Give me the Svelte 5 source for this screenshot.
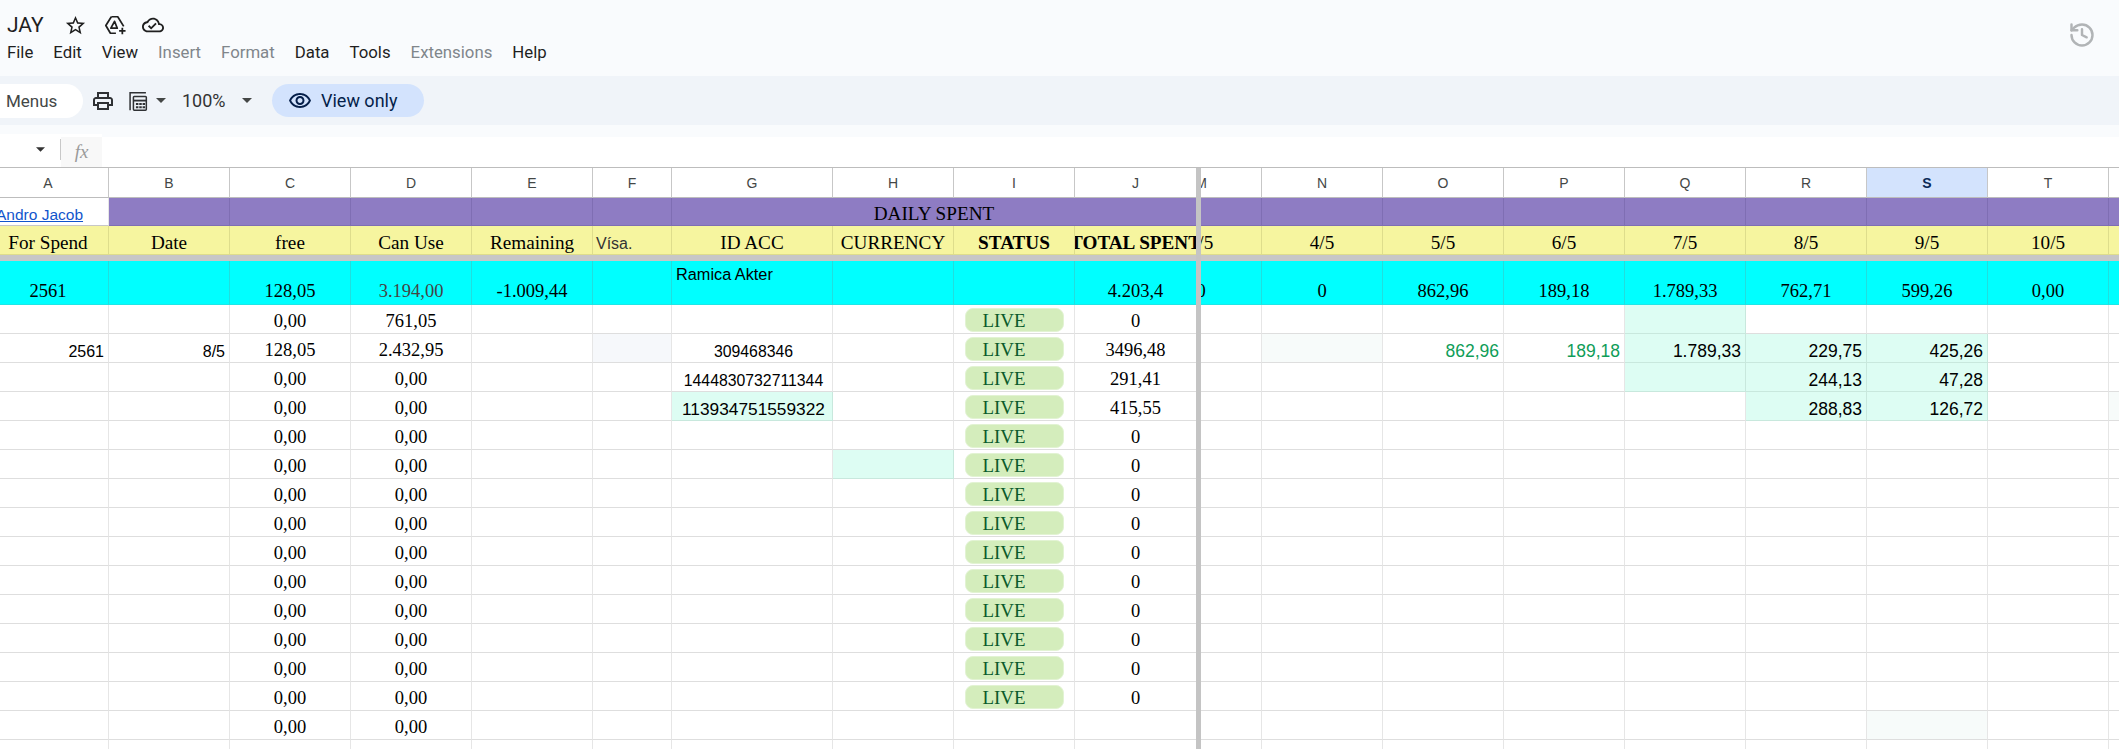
<script>
  const frozenWidths = [121, 121, 121, 121, 121, 79, 161, 121, 121, 122];
  const frozenLetters = ['A', 'B', 'C', 'D', 'E', 'F', 'G', 'H', 'I', 'J'];
  const paneLetters = ['M', 'N', 'O', 'P', 'Q', 'R', 'S', 'T', 'U'];
  const paneWidths = paneLetters.map(() => 121);
  const tracks = (w) => w.map((n) => n + 'px').join(' ');

  const frozenYellow = [
    { t: 'For Spend' }, { t: 'Date' }, { t: 'free' }, { t: 'Can Use' }, { t: 'Remaining' },
    { t: 'Vísa.', c: 'visa' }, { t: 'ID ACC' }, { t: 'CURRENCY' }, { t: 'STATUS', c: 'bold' }, { t: 'TOTAL SPENT', c: 'bold' }
  ];
  const paneYellow = ['3/5', '4/5', '5/5', '6/5', '7/5', '8/5', '9/5', '10/5', ''];
  const frozenCyan = [
    { t: '2561' }, { t: '' }, { t: '128,05' }, { t: '3.194,00', c: 'dim' }, { t: '-1.009,44' }, { t: '' },
    { t: 'Ramica Akter', c: 'note' }, { t: '' }, { t: '' }, { t: '4.203,4' }
  ];
  const paneCyan = ['0', '0', '862,96', '189,18', '1.789,33', '762,71', '599,26', '0,00', ''];

  const ROWS = 16;
  const frozenOverrides = {
    0: { 3: { t: '761,05' } },
    1: {
      0: { t: '2561', c: 'num' }, 1: { t: '8/5', c: 'num' }, 2: { t: '128,05' }, 3: { t: '2.432,95' },
      5: { t: '', c: 'pale' }, 6: { t: '309468346', c: 'id' }, 9: { t: '3496,48' }
    },
    2: { 6: { t: '1444830732711344', c: 'id' }, 9: { t: '291,41' } },
    3: { 6: { t: '113934751559322', c: 'idm mint' }, 9: { t: '415,55' } },
    5: { 7: { t: '', c: 'mint' } }
  };
  const paneOverrides = {
    0: { 4: { t: '', c: 'mint' } },
    1: {
      1: { t: '', c: 'faint' }, 2: { t: '862,96', c: 'big green' }, 3: { t: '189,18', c: 'big green' },
      4: { t: '1.789,33', c: 'big mint' }, 5: { t: '229,75', c: 'big mint' }, 6: { t: '425,26', c: 'big mint' }
    },
    2: { 4: { t: '', c: 'mint' }, 5: { t: '244,13', c: 'big mint' }, 6: { t: '47,28', c: 'big mint' } },
    3: { 5: { t: '288,83', c: 'big mint' }, 6: { t: '126,72', c: 'big mint' }, 8: { t: '', c: 'faint' } },
    14: { 6: { t: '', c: 'faint' } }
  };

  const frozenRows = Array.from({ length: ROWS }, (_, r) =>
    frozenLetters.map((_, i) => {
      const o = frozenOverrides[r]?.[i];
      if (o) return o;
      if ((i === 2 || i === 3) && r < 15) return { t: '0,00' };
      if (i === 8 && r < 14) return { live: true };
      if (i === 9 && r < 14) return { t: '0' };
      return { t: '' };
    })
  );
  const paneRows = Array.from({ length: ROWS }, (_, r) =>
    paneLetters.map((_, i) => paneOverrides[r]?.[i] ?? { t: '' })
  );
  const menu = [
    { t: 'File' }, { t: 'Edit' }, { t: 'View' }, { t: 'Insert', off: true }, { t: 'Format', off: true },
    { t: 'Data' }, { t: 'Tools' }, { t: 'Extensions', off: true }, { t: 'Help' }
  ];
</script>

<div class="page">
  <header class="top">
    <div class="top-left">
      <div class="title-row">
        <span class="doc-title">JAY</span>
        <svg class="ic star" viewBox="0 0 24 24"><path d="M22 9.24l-7.19-.62L12 2 9.19 8.63 2 9.24l5.46 4.73L5.82 21 12 17.27 18.18 21l-1.63-7.03L22 9.24zM12 15.4l-3.76 2.27 1-4.28-3.32-2.88 4.38-.38L12 6.1l1.71 4.04 4.38.38-3.32 2.88 1 4.28L12 15.4z"/></svg>
        <svg class="drive" viewBox="0 0 24 24" fill="none" stroke="#1f1f1f" stroke-width="1.9" stroke-linejoin="round"><path d="M8 3h7l6.5 10.5"/><path d="M13 21H7L2 12.5 8 3"/><path d="M11.5 8L7.5 15.5h7z"/><path d="M20 15v7M16.5 18.5h7"/></svg>
        <svg class="ic cloud" viewBox="0 0 24 24"><path d="M19.35 10.04C18.67 6.59 15.64 4 12 4 9.11 4 6.6 5.64 5.35 8.04 2.34 8.36 0 10.91 0 14c0 3.31 2.69 6 6 6h13c2.76 0 5-2.24 5-5 0-2.64-2.05-4.78-4.65-4.96zM19 18H6c-2.21 0-4-1.79-4-4 0-2.05 1.53-3.76 3.56-3.97l1.07-.11.5-.95C8.08 7.14 9.94 6 12 6c2.62 0 4.88 1.86 5.39 4.43l.3 1.5 1.53.11c1.56.1 2.78 1.41 2.78 2.96 0 1.65-1.35 3-3 3zm-9-3.82l-2.09-2.09L6.5 13.5 10 17l6.01-6.01-1.41-1.41z"/></svg>
      </div>
      <nav class="menu">
        {#each menu as m}
          <span class:off={m.off}>{m.t}</span>
        {/each}
      </nav>
    </div>
    <svg class="history" viewBox="0 0 24 24" fill="none" stroke="#b1b4b6" stroke-width="2.1" stroke-linecap="round" stroke-linejoin="round"><path d="M3 12a9 9 0 1 0 9-9 9.75 9.75 0 0 0-6.74 2.74L3 8"/><path d="M3 3v5h5"/><path d="M12 7v5l4 2"/></svg>
  </header>

  <div class="toolbar">
    <span class="pill-menus">Menus</span>
    <svg class="print" viewBox="0 0 24 24"><path d="M19 8h-1V3H6v5H5c-1.66 0-3 1.34-3 3v6h4v4h12v-4h4v-6c0-1.66-1.34-3-3-3zM8 5h8v3H8V5zm8 12v2H8v-4h8v2zm2-2v-2H6v2H4v-4c0-.55.45-1 1-1h14c.55 0 1 .45 1 1v4h-2z"/></svg>
    <svg class="calc" viewBox="0 0 24 24" fill="none" stroke="#2f3134" stroke-width="1.8"><path d="M2.5 23V2h19"/><rect x="6.5" y="6.5" width="15.5" height="16.5" rx="1"/><path d="M6.5 11.5h15.5" stroke-width="2.2"/><path d="M9.5 15.5h3m1 0h3m1 0h3M9.5 19.5h3m1 0h3m1 0h3" stroke-width="2.4"/></svg>
    <svg class="caret c1" viewBox="0 0 10 5"><path d="M0 0h10L5 5z"/></svg>
    <span class="zoom">100%</span>
    <svg class="caret c2" viewBox="0 0 10 5"><path d="M0 0h10L5 5z"/></svg>
    <span class="view-only">
      <svg viewBox="0 0 24 24"><path d="M12 6c3.79 0 7.17 2.13 8.82 5.5C19.17 14.87 15.79 17 12 17s-7.17-2.13-8.82-5.5C4.83 8.13 8.21 6 12 6m0-2C7 4 2.73 7.11 1 11.5 2.73 15.89 7 19 12 19s9.27-3.11 11-7.5C21.27 7.11 17 4 12 4zm0 5c1.38 0 2.5 1.12 2.5 2.5S13.38 14 12 14s-2.5-1.12-2.5-2.5S10.62 9 12 9m0-2c-2.48 0-4.5 2.02-4.5 4.5S9.52 16 12 16s4.5-2.02 4.5-4.5S14.48 7 12 7z"/></svg>
      View only
    </span>
  </div>

  <div class="strip"></div>

  <div class="formula">
    <div class="name-box">
      <svg class="caret c3" viewBox="0 0 10 5"><path d="M0 0h10L5 5z"/></svg>
    </div>
    <span class="sep"></span>
    <span class="fx">fx</span>
    <div class="formula-input"></div>
  </div>

  <div class="sheet">
    <div class="pane frozen">
      <div class="grid g-frozen" style="grid-template-columns:{tracks(frozenWidths)}">
        {#each frozenLetters as l}<div class="cell hd">{l}</div>{/each}

        <div class="cell plain link-cell"><a href="#top">Andro Jacob</a></div>
        {#each [1, 2, 3, 4, 5] as _}<div class="cell purple"></div>{/each}
        <div class="cell purple merged">DAILY SPENT</div>

        {#each frozenYellow as c}<div class="cell yellow {c.c ?? ''}">{c.t}</div>{/each}

        <div class="freeze-h"></div>

        {#each frozenCyan as c}<div class="cell cyan {c.c ?? ''}">{c.t}</div>{/each}

        {#each frozenRows as row}
          {#each row as c}
            {#if c.live}
              <div class="cell body"><span class="live">LIVE</span></div>
            {:else}
              <div class="cell body {c.c ?? ''}">{c.t}</div>
            {/if}
          {/each}
        {/each}
      </div>
    </div>

    <div class="freeze-v"></div>

    <div class="pane scrolled">
      <div class="grid g-pane" style="grid-template-columns:{tracks(paneWidths)}">
        {#each paneLetters as l}<div class="cell hd" class:sel={l === 'S'}>{l}</div>{/each}
        {#each paneLetters as _}<div class="cell purple"></div>{/each}
        {#each paneYellow as t}<div class="cell yellow">{t}</div>{/each}
        <div class="freeze-h"></div>
        {#each paneCyan as t}<div class="cell cyan">{t}</div>{/each}
        {#each paneRows as row}
          {#each row as c}<div class="cell body {c.c ?? ''}">{c.t}</div>{/each}
        {/each}
      </div>
    </div>
  </div>
</div>

<style>
  :global(body) { margin: 0; background: #fff; }
  .page { width: 2119px; height: 749px; overflow: hidden; display: flex; flex-direction: column; font-family: Roboto, "Liberation Sans", sans-serif; color: #1f1f1f; }

  .top { height: 76px; box-sizing: border-box; background: #f9fbfd; display: flex; justify-content: space-between; padding: 13px 23px 0 0; }
  .title-row { height: 24px; display: flex; align-items: center; padding-left: 7px; }
  .doc-title { font-size: 21px; width: 57px; }
  .ic { fill: #1f1f1f; display: block; }
  .star { width: 23px; height: 23px; }
  .drive { display: block; width: 22px; height: 22px; margin-left: 17px; }
  .cloud { width: 22px; height: 22px; margin-left: 16px; }
  .menu { display: flex; gap: 20px; padding-left: 7px; margin-top: 4px; font-size: 16.8px; line-height: 22px; }
  .menu .off { color: #80868b; }
  .history { width: 28px; height: 28px; margin-top: 8px; }

  .toolbar { height: 49px; background: #f0f4f9; display: flex; align-items: center; }
  .pill-menus { height: 34px; padding-left: 6px; box-sizing: border-box; width: 83px; background: #fff; border-radius: 0 17px 17px 0; display: flex; align-items: center; font-size: 17px; color: #444746; }
  .print { display: block; fill: #2f3134; width: 24px; height: 24px; margin-left: 8px; }
  .calc { display: block; width: 20px; height: 20px; margin-left: 13px; }
  .caret { display: block; fill: #444746; }
  .c1 { width: 10px; height: 5px; margin-left: 8px; }
  .zoom { font-size: 18px; color: #333; margin-left: 16px; width: 44px; }
  .c2 { width: 10px; height: 5px; margin-left: 16px; }
  .view-only { margin-left: 20px; width: 152px; height: 33px; box-sizing: border-box; padding-left: 17px; background: #d3e3fd; border-radius: 17px; display: flex; align-items: center; gap: 9px; color: #041e49; font-size: 18px; }
  .view-only svg { width: 24px; height: 24px; fill: #041e49; margin-left: -1px; }

  .strip { height: 9px; background: #f9fbfd; }
  .formula { height: 34px; box-sizing: border-box; background: #fff; display: flex; align-items: center; border-bottom: 1px solid #bdbdbd; }
  .name-box { width: 60px; height: 100%; display: flex; align-items: center; box-sizing: border-box; padding-left: 36px; }
  .c3 { width: 9px; height: 5px; fill: #333; margin-top: -3px; }
  .sep { width: 1px; height: 21px; background: #c8c8c8; margin-top: -3px; }
  .fx { width: 41px; height: 30px; margin-top: 3px; background: #f8f8f8; display: flex; align-items: center; justify-content: center; font: italic 19px "Liberation Serif", serif; color: #9a9a9a; }
  .formula-input { flex: 1; align-self: flex-start; height: 3px; background: #f9fbfd; }

  .sheet { flex: 1; display: flex; min-height: 0; }
  .pane { overflow: hidden; }
  .frozen { width: 1196px; flex: none; }
  .scrolled { flex: 1; min-width: 0; }
  .freeze-v { width: 5px; flex: none; background: #c4c4c4; }
  .grid { display: grid; grid-template-rows: 30px 28px 29px 6px 44px repeat(16, 29px); width: max-content; }
  .g-frozen { margin-left: -12px; }
  .g-pane { margin-left: -60px; }
  .freeze-h { grid-column: 1 / -1; background: #c7c7c7; }

  .cell { box-sizing: border-box; border-right: 1px solid #e6e6e6; border-bottom: 1px solid #dedede; display: flex; align-items: flex-end; justify-content: center; white-space: nowrap; overflow: hidden; font: 18.5px/24px "Liberation Serif", serif; color: #000; min-width: 0; }

  .hd { background: #fff; border-right-color: #c7c7c7; border-bottom-color: #bdbdbd; align-items: center; font: 14px "Liberation Sans", sans-serif; color: #444746; }
  .hd.sel { background: #d3e3fd; color: #0b2a57; font-weight: 700; }

  .plain { border-bottom: 1px solid #c7c7c7; }
  .link-cell { justify-content: flex-start; padding-left: 8px; font: 15.5px/21px "Liberation Sans", sans-serif; }
  .link-cell a { color: #1155cc; text-decoration: underline; }

  .purple { background: #8e7cc3; border-right-color: #7f6eb3; border-bottom: 1px solid #7f6eb3; font-size: 19.2px; line-height: 23px; }
  .merged { grid-column: span 4; }
  .yellow { background: #f6f59f; border-right-color: #dedd8c; border-bottom: 1px solid #dedd8c; font-size: 19.2px; line-height: 23px; }
  .bold { font-weight: 700; }
  .cell.visa { justify-content: flex-start; padding-left: 3px; font: 16px/20px "Liberation Sans", sans-serif; color: #333; }

  .cyan { background: #00ffff; border-right-color: #20dede; border-bottom: 1px solid #20e6e6; padding-bottom: 1.5px; }
  .dim { color: #444; }
  .note { align-items: flex-start; justify-content: flex-start; padding: 3px 0 0 4px; font: 16.3px/20px "Liberation Sans", sans-serif; }

  .body.num, .body.id, .body.idm, .body.big { font-family: "Liberation Sans", sans-serif; }
  .body.num { justify-content: flex-end; padding-right: 4px; font-size: 16px; line-height: 21px; }
  .body.id { font-size: 15.8px; line-height: 21px; padding-left: 3px; }
  .body.idm { font-size: 17.3px; line-height: 22px; padding-left: 3px; }
  .body.big { justify-content: flex-end; padding-right: 4px; font-size: 17.5px; line-height: 22px; }
  .green { color: #0f9d58; }
  .mint { background: #ddfdf3; border-right-color: #c8e8dd; border-bottom-color: #c8e8dd; }
  .faint { background: #f7fbfa; }
  .pale { background: #f6f8fb; }

  .live { box-sizing: border-box; width: 99px; height: 24px; margin-bottom: 1px; padding-left: 17px; background: #d4edbc; border-radius: 8px; border: 1px solid #e2f3d3; color: #0a5a2b; font-size: 18.9px; line-height: 23px; }
</style>
